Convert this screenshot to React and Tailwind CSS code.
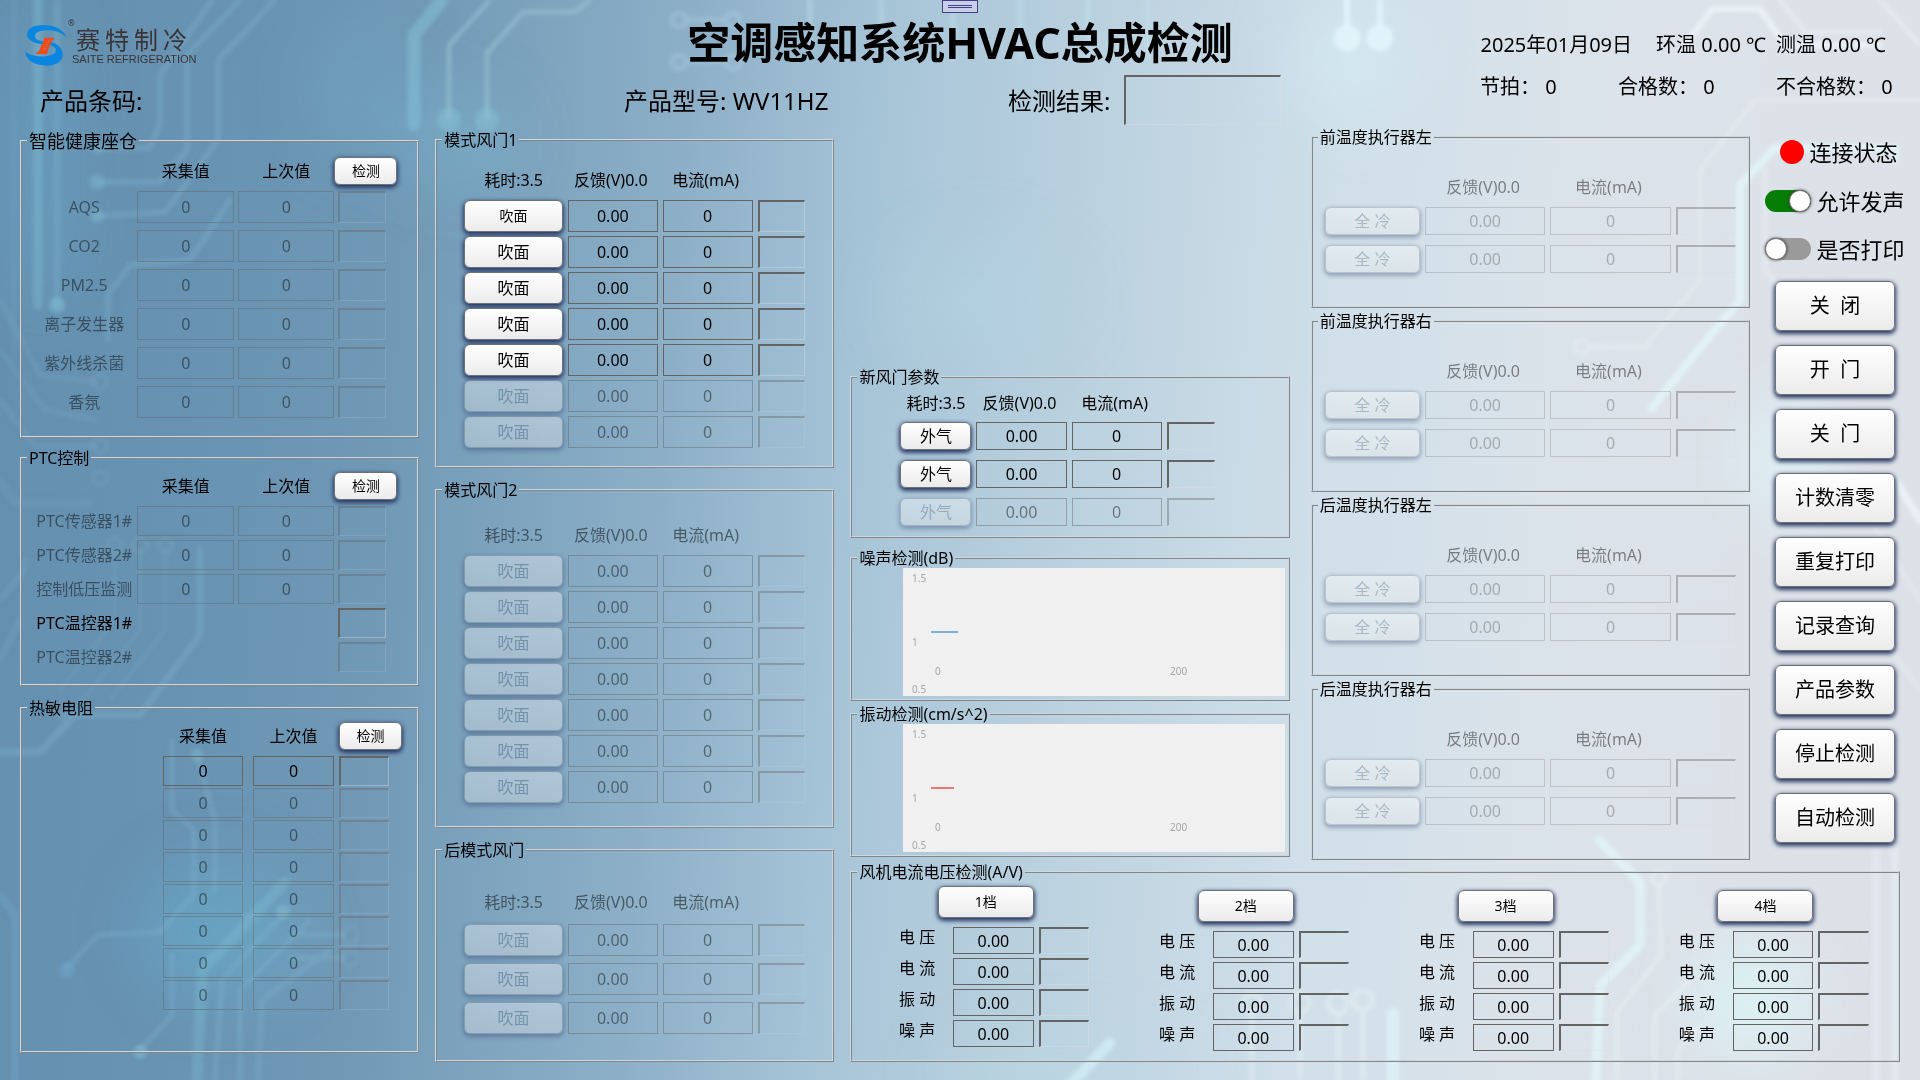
import React from "react";

const INK = "border-[#646464]";

function Circuits() {
  return (
    <svg
      aria-hidden="true"
      className="absolute inset-0 h-full w-full"
      viewBox="0 0 1920 1080"
      preserveAspectRatio="none"
      fill="none"
      strokeLinejoin="round"
      strokeLinecap="round"
    >
      <defs>
        <filter id="soft" x="-5%" y="-5%" width="110%" height="110%">
          <feGaussianBlur stdDeviation="2" />
        </filter>
        <filter id="wide" x="-50%" y="-50%" width="200%" height="200%">
          <feGaussianBlur stdDeviation="30" />
        </filter>
      </defs>
      <g filter="url(#wide)">
        <ellipse cx="360" cy="90" rx="60" ry="70" fill="#6fb4cf" opacity="0.22" />
        <ellipse cx="455" cy="140" rx="60" ry="50" fill="#7cc0d6" opacity="0.3" />
        <ellipse cx="40" cy="160" rx="40" ry="160" fill="#70b4d0" opacity="0.28" />
        <ellipse cx="220" cy="930" rx="80" ry="70" fill="#68b4d4" opacity="0.4" />
        <ellipse cx="980" cy="300" rx="90" ry="60" fill="#b4d8e6" opacity="0.35" />
        <ellipse cx="1350" cy="60" rx="60" ry="60" fill="#d6f0f8" opacity="0.5" />
        <ellipse cx="1790" cy="460" rx="50" ry="60" fill="#dff6fb" opacity="0.6" />
        <ellipse cx="1755" cy="1000" rx="60" ry="60" fill="#dcf6fa" opacity="0.7" />
        <ellipse cx="1060" cy="1070" rx="120" ry="30" fill="#b9d9e6" opacity="0.5" />
      </g>
      <g filter="url(#soft)" stroke="#86bdd6" strokeWidth="6" opacity="0.3">
        <path d="M212 0L160 75V125L150 148H97" />
        <path d="M240 0L187 55V150L160 182H97" />
        <path d="M275 0L218 60V140L165 212L97 216" />
        <path d="M230 200L190 260L130 265L108 295V340" />
        <path d="M57 0V305" />
        <path d="M14 0V360" strokeWidth="4" opacity="0.5" />
        <path d="M0 300L40 375L95 382" opacity="0.6" />
        <path d="M0 400L35 446H95M0 350L45 410L95 420" opacity="0.6" />
        <path d="M0 480L15 503H90" strokeWidth="9" opacity="0.5" />
        <path d="M200 550V635L140 715H60" strokeWidth="7" />
        <path d="M115 550V620L60 690M140 550V630L70 715M165 550V630L110 700" strokeWidth="4" opacity="0.6" />
        <path d="M0 600L25 570V560M0 660L20 620" opacity="0.7" />
        <path d="M0 752H40L75 715" strokeWidth="8" />
        <path d="M172 740V810L194 830V895L160 932L98 935L67 968" strokeWidth="5" />
        <path d="M197 755L215 820V890" strokeWidth="5" />
        <path d="M285 882L202 970L197 1080" strokeWidth="11" stroke="#84c6d8" />
        <path d="M282 915L222 980L215 1080M310 920L240 990V1080M330 950L262 1000L258 1080" strokeWidth="5" />
        <path d="M172 955V1015L140 1050" strokeWidth="5" />
        <path d="M290 935H343M290 958H343" strokeWidth="5" />
        <path d="M0 895L15 915V1080" strokeWidth="8" stroke="#79b0d6" />
      </g>
      <g filter="url(#soft)" stroke="#82bed4" opacity="0.6">
        <path d="M38 0V305" strokeWidth="9" opacity="0.7" />
        <path d="M442 0L414 35V125" strokeWidth="13" />
        <path d="M490 0L449 45V118" strokeWidth="4" stroke="#a3c9dc" />
        <path d="M590 0L575 12H523L487 53V118" strokeWidth="4" stroke="#a3c9dc" />
      </g>
      <g filter="url(#soft)" fill="#86c2d6" opacity="0.5">
        <circle cx="449" cy="120" r="12" />
        <circle cx="487" cy="120" r="12" />
        <circle cx="57" cy="305" r="8" />
        <circle cx="97" cy="148" r="7" opacity="0.5" />
        <circle cx="97" cy="182" r="8" opacity="0.7" />
        <circle cx="97" cy="216" r="7" opacity="0.7" />
        <circle cx="197" cy="755" r="7" opacity="0.7" />
        <circle cx="67" cy="970" r="8" fill="#72a8d2" />
        <circle cx="140" cy="1052" r="7" />
        <circle cx="283" cy="912" r="7" />
      </g>
      <g filter="url(#soft)" stroke="#8fc0d6" strokeWidth="4" opacity="0.2">
        <circle cx="100" cy="382" r="7" />
        <circle cx="100" cy="446" r="7" />
        <circle cx="100" cy="478" r="7" />
        <circle cx="115" cy="545" r="7" />
        <circle cx="140" cy="545" r="7" />
        <circle cx="165" cy="545" r="7" />
        <circle cx="350" cy="935" r="8" />
        <circle cx="350" cy="958" r="8" />
      </g>
      <g filter="url(#soft)" stroke="#c4e4f0" strokeWidth="5" opacity="0.45">
        <path d="M810 0V50M881 0V50M953 0V60M1020 0V60M1088 0V60M1148 0V60" />
        <g opacity="0.6">
          <circle cx="679" cy="20" r="7" />
          <circle cx="733" cy="20" r="7" />
          <circle cx="679" cy="62" r="7" />
          <circle cx="733" cy="62" r="7" />
          <path d="M688 20H724M688 62H724" />
        </g>
      </g>
      <g filter="url(#soft)" fill="#e2f7fc" stroke="#e2f7fc" opacity="0.85">
        <path d="M1347 0V30M1380 0V30" strokeWidth="6" />
        <circle cx="1347" cy="38" r="13" />
        <circle cx="1380" cy="38" r="13" />
      </g>
      <g filter="url(#soft)" stroke="#eef8fc" opacity="0.75">
        <path d="M1685 45L1712 9H1760L1785 45H1880" strokeWidth="6" />
        <path d="M1880 0L1920 45M1780 0L1805 32H1880" strokeWidth="4" opacity="0.7" />
        <path d="M1920 100H1755L1700 170V280L1645 347H1590" strokeWidth="5" opacity="0.5" />
        <path d="M1895 160V148H1775L1740 185V300L1690 360L1652 408" strokeWidth="8" stroke="#e4f8fc" />
        <path d="M1765 170V270L1790 300" strokeWidth="5" opacity="0.5" />
        <circle cx="1582" cy="347" r="7" strokeWidth="4" opacity="0.5" />
        <path d="M1895 480L1920 520" strokeWidth="8" />
        <path d="M1870 520L1920 600M1870 620L1920 690" strokeWidth="5" opacity="0.4" />
        <path d="M1110 1043L1070 1085" strokeWidth="11" stroke="#d3eff5" />
        <path d="M1393 1014V1080" strokeWidth="12" stroke="#dff4fa" />
        <path d="M1599 840L1640 882V945L1600 985L1596 1080" strokeWidth="9" stroke="#e2f6fa" />
        <path d="M1659 886L1661 955L1617 1012V1080" strokeWidth="4" opacity="0.6" />
        <path d="M1690 980L1655 1015V1080M1700 1025L1678 1050V1080" strokeWidth="4" opacity="0.6" />
        <path d="M1876 850V1080M1895 850V1080" strokeWidth="8" stroke="#e8f1fa" opacity="0.6" />
        <circle cx="1659" cy="878" r="7" strokeWidth="4" opacity="0.6" />
        <g strokeWidth="4" opacity="0.6">
          <circle cx="1252" cy="1003" r="9" />
          <circle cx="1300" cy="1003" r="9" />
          <circle cx="1338" cy="1003" r="10" />
          <circle cx="1363" cy="1000" r="10" />
          <path d="M1252 1015V1080M1300 1015V1080M1338 1015V1080M1363 1012V1080" />
        </g>
      </g>
    </svg>
  );
}

function Logo() {
  return (
    <div className="flex items-start gap-1 pl-6 pt-[11px] text-[#3a3437]">
      <svg viewBox="42 38 132 132" className="h-11 w-11 shrink-0" aria-hidden="true">
        <path
          fill="#0a86e0"
          d="M170 82C162 56 130 42 94 44C64 46 48 58 52 78C56 92 78 101 110 104L128 98C98 96 76 90 74 78C74 66 92 60 112 60C138 60 158 68 170 82Z"
        />
        <path
          fill="#0a86e0"
          d="M46 125C46 146 72 166 110 166C144 166 162 148 158 128C155 110 140 98 118 94L112 100C132 106 142 116 136 126C126 142 74 144 46 125Z"
        />
        <path fill="#f04a16" d="M102 82H134L132 87L127 89L112 123L114 126L110 131H78L80 126L86 124L102 89Z" />
        <path d="M118 88L100 126" stroke="#7aa3be" strokeWidth="3" strokeDasharray="3 4" />
      </svg>
      <div className="relative pt-0.5">
        <span className="absolute -left-1 -top-1.5 text-[8px] leading-3">®</span>
        <div className="flex gap-[5px] pl-1 font-['Noto_Sans_CJK_SC'] text-2xl leading-7">
          <span>赛</span>
          <span>特</span>
          <span>制</span>
          <span>冷</span>
        </div>
        <div className="whitespace-nowrap font-['Liberation_Sans'] text-[11px] leading-3">SAITE REFRIGERATION</div>
      </div>
    </div>
  );
}

function Panel({ title, big, className = "", children }) {
  return (
    <fieldset className={`min-w-0 border-2 border-[#cfd8de] [border-style:ridge] ${className}`}>
      <legend className={`ml-[5px] px-0.5 ${big ? "text-lg leading-5" : "text-base leading-5"}`}>{title}</legend>
      {children}
    </fieldset>
  );
}

function Field({ value, label, off, faint, className = "h-8" }) {
  return (
    <input
      type="text"
      readOnly
      disabled={off}
      defaultValue={value}
      aria-label={label}
      className={`block w-full min-w-0 border bg-transparent p-0 text-center text-base text-black ${INK} ${
        off ? (faint ? "opacity-25" : "opacity-45") : ""
      } ${className}`}
    />
  );
}

function Lamp({ off, className = "h-8" }) {
  return (
    <div
      className={`border-b border-l-2 border-r border-t-2 border-b-[#dcdfe2]/40 border-l-[#646464] border-r-[#dcdfe2]/40 border-t-[#646464] ${
        off ? "opacity-40" : ""
      } ${className}`}
    />
  );
}

function Btn({ children, off, className = "" }) {
  return (
    <button
      type="button"
      disabled={off}
      className={`whitespace-pre rounded-md border bg-linear-to-b from-white to-[#ebebeb] shadow-[0_2px_4px_1px_#2b3b66] ${
        off ? "border-[#8d9098] text-[#5f6f80] opacity-35" : "border-[#6d7078] text-black"
      } ${className}`}
    >
      {children}
    </button>
  );
}

const SENSOR_COLS = "grid grid-cols-[103fr_97fr_97fr_48fr] gap-x-1 pl-[9px] pr-[31px]";

function SensorPanel({ title, big, rows, rowClass, gapClass, className }) {
  return (
    <Panel title={title} big={big} className={className}>
      <div className={`${SENSOR_COLS} mb-1.5 items-center text-center`}>
        <span className="col-start-2">采集值</span>
        <span>上次值</span>
        <div className="-ml-1 min-w-0 text-left">
          <Btn className="h-7 w-[63px] text-sm">检测</Btn>
        </div>
      </div>
      <div className={`grid ${gapClass}`}>
        {rows.map((r) => (
          <div key={r.name} className={`${SENSOR_COLS} items-center`}>
            <span className={`min-w-0 whitespace-nowrap pl-1 text-center ${r.on ? "" : "opacity-45"}`}>{r.name}</span>
            {r.bare ? (
              <span className="col-span-2" />
            ) : (
              <>
                <Field value="0" label={`${r.name} 采集值`} off={!r.on} className={rowClass} />
                <Field value="0" label={`${r.name} 上次值`} off={!r.on} className={rowClass} />
              </>
            )}
            <Lamp off={!r.on} className={rowClass} />
          </div>
        ))}
      </div>
    </Panel>
  );
}

const THERM_COLS = "grid grid-cols-[138fr_80fr_6fr_80fr_1fr_50fr] gap-x-0.5 pr-7";

function ThermistorPanel() {
  return (
    <Panel title="热敏电阻" className="pb-[41px]">
      <div className={`${THERM_COLS} mb-1.5 mt-1 items-center text-center`}>
        <span className="col-start-2">采集值</span>
        <span className="col-start-4">上次值</span>
        <div className="col-start-6 min-w-0 text-left">
          <Btn className="h-7 w-[63px] text-sm">检测</Btn>
        </div>
      </div>
      <div className="grid gap-0.5">
        {[0, 1, 2, 3, 4, 5, 6, 7].map((i) => (
          <div key={i} className={THERM_COLS}>
            <div className="col-start-2">
              <Field value="0" label={`热敏电阻${i + 1} 采集值`} off={i > 0} className="h-[30px]" />
            </div>
            <div className="col-start-4">
              <Field value="0" label={`热敏电阻${i + 1} 上次值`} off={i > 0} className="h-[30px]" />
            </div>
            <div className="col-start-6">
              <Lamp off={i > 0} className="h-[30px]" />
            </div>
          </div>
        ))}
      </div>
    </Panel>
  );
}

const MODE_COLS = "grid grid-cols-[99fr_90fr_90fr_48fr] gap-x-[5px] px-[27px]";

function ModePanel({ title, count, active, gapClass, padClass, headClass = "h-10" }) {
  return (
    <Panel title={title} className={padClass}>
      <div className={`${MODE_COLS} items-center whitespace-nowrap text-center ${headClass} ${active ? "" : "opacity-50"}`}>
        <span>耗时:3.5</span>
        <span className="-ml-1">反馈(V)0.0</span>
        <span className="-ml-1">电流(mA)</span>
      </div>
      <div className={`grid ${gapClass}`}>
        {Array.from({ length: count }, (_, i) => {
          const off = i >= active;
          return (
            <div key={i} className={MODE_COLS}>
              <Btn off={off} className={i === 0 && !off ? "text-sm" : "text-base"}>
                吹面
              </Btn>
              <Field value="0.00" label={`${title} 反馈${i + 1}`} off={off} />
              <Field value="0" label={`${title} 电流${i + 1}`} off={off} />
              <Lamp off={off} />
            </div>
          );
        })}
      </div>
    </Panel>
  );
}

const FRESH_COLS = "grid grid-cols-[71fr_90fr_90fr_48fr] gap-x-[5px] pl-12 pr-[73px]";

function FreshPanel() {
  return (
    <Panel title="新风门参数" className="mt-60 pb-[10px]">
      <div className={`${FRESH_COLS} mb-1 h-[31px] items-center whitespace-nowrap text-center`}>
        <span>耗时:3.5</span>
        <span className="-ml-1">反馈(V)0.0</span>
        <span className="-ml-1">电流(mA)</span>
      </div>
      <div className="grid gap-2.5">
        {[0, 1, 2].map((i) => (
          <div key={i} className={FRESH_COLS}>
            <Btn off={i === 2}>外气</Btn>
            <Field value="0.00" label={`新风门反馈${i + 1}`} off={i === 2} className="h-7" />
            <Field value="0" label={`新风门电流${i + 1}`} off={i === 2} className="h-7" />
            <Lamp off={i === 2} className="h-7" />
          </div>
        ))}
      </div>
    </Panel>
  );
}

function ChartPanel({ title, color, end, className }) {
  return (
    <Panel title={title} className={className}>
      <div className="pb-[3px] pl-[51px] pr-[3px]">
        <svg className="block h-32 w-full bg-[#f0f0f0]" role="img" aria-label={title}>
          <g fill="#a6a6a6" fontSize="10">
            <text x="9" y="14">1.5</text>
            <text x="9" y="78">1</text>
            <text x="9" y="125">0.5</text>
            <text x="32" y="107">0</text>
            <text x="267" y="107">200</text>
          </g>
          <path d={`M28 64H${end}`} stroke={color} strokeWidth="1.4" />
        </svg>
      </div>
    </Panel>
  );
}

const TEMP_COLS = "grid grid-cols-[95fr_120fr_120fr_60fr] gap-x-[5px] px-3";

function TempPanel({ title }) {
  return (
    <Panel title={title} className="pb-[33px] pt-5">
      <div className={`${TEMP_COLS} h-10 items-center text-center opacity-45`}>
        <span className="col-start-2 -ml-1">反馈(V)0.0</span>
        <span className="-ml-1">电流(mA)</span>
      </div>
      <div className="grid gap-2.5">
        {[1, 2].map((i) => (
          <div key={i} className={TEMP_COLS}>
            <Btn off>全 冷</Btn>
            <Field value="0.00" label={`${title} 反馈${i}`} off faint className="h-7" />
            <Field value="0" label={`${title} 电流${i}`} off faint className="h-7" />
            <Lamp off className="h-7" />
          </div>
        ))}
      </div>
    </Panel>
  );
}

function FanPanel() {
  return (
    <Panel title="风机电流电压检测(A/V)" className="mr-2 mt-0.5 pb-[9px]">
      <div className="grid grid-cols-4 pr-1.5 pt-1">
        {["1档", "2档", "3档", "4档"].map((gear, g) => (
          <div key={gear} className={`grid grid-cols-[57fr_80fr_50fr] content-start gap-x-[5px] gap-y-1 pl-[38px] pr-[23px] ${g ? "pt-1" : ""}`}>
            <Btn className="col-span-2 mb-[5px] h-8 w-24 justify-self-end text-sm">{gear}</Btn>
            {["电 压", "电 流", "振 动", "噪 声"].map((n) => (
              <React.Fragment key={n}>
                <span className="col-start-1 pr-1 text-center leading-5">{n}</span>
                <Field value="0.00" label={`${gear} ${n}`} className="h-[27px]" />
                <Lamp className="h-[27px]" />
              </React.Fragment>
            ))}
          </div>
        ))}
      </div>
    </Panel>
  );
}

function Toggle({ label, on }) {
  return (
    <label className="flex h-12 items-center gap-[5px] whitespace-nowrap text-[22px]">
      <input
        type="checkbox"
        role="switch"
        defaultChecked={on}
        className="h-[22px] w-[46px] shrink-0 appearance-none rounded-full bg-[#9a9a9a] before:block before:h-[22px] before:w-[22px] before:rounded-full before:border before:border-[#777] before:bg-white before:shadow-[0_0_3px_#333] checked:bg-[#067d06] checked:before:ml-6"
      />
      {label}
    </label>
  );
}

const ACTIONS = ["关  闭", "开  门", "关  门", "计数清零", "重复打印", "记录查询", "产品参数", "停止检测", "自动检测"];

const HEALTH = ["AQS", "CO2", "PM2.5", "离子发生器", "紫外线杀菌", "香氛"].map((name) => ({ name }));
const PTC = [
  { name: "PTC传感器1#" },
  { name: "PTC传感器2#" },
  { name: "控制低压监测" },
  { name: "PTC温控器1#", on: true, bare: true },
  { name: "PTC温控器2#", bare: true },
];

export default function App() {
  return (
    <div className="relative min-h-screen w-full overflow-hidden bg-[linear-gradient(94deg,#648fae_0%,#6893b2_12%,#7199b6_21%,#8db0c8_35%,#a8c5d8_45%,#bdd3e0_57%,#d0dfe9_68%,#dbe3ea_80%,#dde0e7_100%)] pb-[18px] font-['Noto_Sans','Noto_Sans_CJK_SC',sans-serif] text-base text-black">
      <Circuits />
      <div className="absolute left-1/2 top-0 z-10 flex h-[13px] w-9 -translate-x-1/2 flex-col items-center justify-center gap-px border border-[#3f4481] bg-[#c8cdec]">
        <span className="h-px w-6 bg-[#3f4481]" />
        <span className="h-px w-6 bg-[#3f4481]" />
      </div>
      <div className="relative">
        <header>
          <div className="grid h-[74px] grid-cols-[1fr_auto_1fr] pt-3">
            <Logo />
            <h1 className="whitespace-nowrap text-[43px] font-bold leading-[62px]">空调感知系统HVAC总成检测</h1>
            <div className="flex items-center justify-end whitespace-nowrap pr-[34px] pt-1 text-xl">
              <span className="mr-6">2025年01月09日</span>
              <span className="mr-2.5">环温 0.00 ℃</span>
              <span>测温 0.00 ℃</span>
            </div>
          </div>
          <div className="grid h-[53px] grid-cols-[584fr_384fr_472fr_440fr] whitespace-nowrap pl-10 text-2xl leading-[53px]">
            <div>产品条码:</div>
            <div>产品型号: WV11HZ</div>
            <div className="flex">
              <span className="w-[116px]">检测结果:</span>
              <Lamp className="mt-px h-[50px] w-[157px]" />
            </div>
            <div className="grid grid-cols-[138fr_158fr_144fr] text-xl leading-[26px]">
              <span>节拍： 0</span>
              <span>合格数： 0</span>
              <span>不合格数： 0</span>
            </div>
          </div>
        </header>
        <main className="grid grid-cols-[399fr_399fr_1057fr] gap-x-4 pl-5 pr-3">
          <div className="pt-1">
            <SensorPanel title="智能健康座仓" big rows={HEALTH} rowClass="h-8" gapClass="gap-[7px]" className="mb-2.5 pb-[18px] pt-1.5" />
            <SensorPanel title="PTC控制" rows={PTC} rowClass="h-[30px]" gapClass="gap-1" className="mb-3 pb-3 pt-1" />
            <ThermistorPanel />
          </div>
          <div className="flex flex-col gap-3 pt-[3px]">
            <ModePanel title="模式风门1" count={7} active={5} gapClass="gap-1" padClass="pt-2.5 pb-[18px]" />
            <ModePanel title="模式风门2" count={7} active={0} gapClass="gap-1" padClass="pt-[15px] pb-[23px]" />
            <ModePanel title="后模式风门" count={3} active={0} gapClass="gap-[7px]" padClass="pt-6 pb-[26px]" headClass="mb-1 h-9" />
          </div>
          <div>
            <div className="grid grid-cols-[439fr_460fr_158fr]">
              <div>
                <FreshPanel />
                <ChartPanel title="噪声检测(dB)" color="#4a90c8" end={55} className="mt-2.5" />
                <ChartPanel title="振动检测(cm/s^2)" color="#f04040" end={51} className="mt-[3px]" />
              </div>
              <div className="flex min-w-0 flex-col gap-[3px] pl-[21px]">
                {["前温度执行器左", "前温度执行器右", "后温度执行器左", "后温度执行器右"].map((t) => (
                  <TempPanel key={t} title={t} />
                ))}
              </div>
              <div className="flex flex-col items-center pl-3">
                <div className="flex h-[50px] items-center gap-[5px] whitespace-nowrap pl-2 text-[22px]">
                  <span className="size-6 rounded-full bg-[#ff0000]" />
                  连接状态
                </div>
                <Toggle label="允许发声" on />
                <Toggle label="是否打印" />
                <div className="mt-2 flex flex-col gap-3.5">
                  {ACTIONS.map((a) => (
                    <Btn key={a} className="h-[50px] w-[120px] text-xl">
                      {a}
                    </Btn>
                  ))}
                </div>
              </div>
            </div>
            <FanPanel />
          </div>
        </main>
      </div>
    </div>
  );
}
